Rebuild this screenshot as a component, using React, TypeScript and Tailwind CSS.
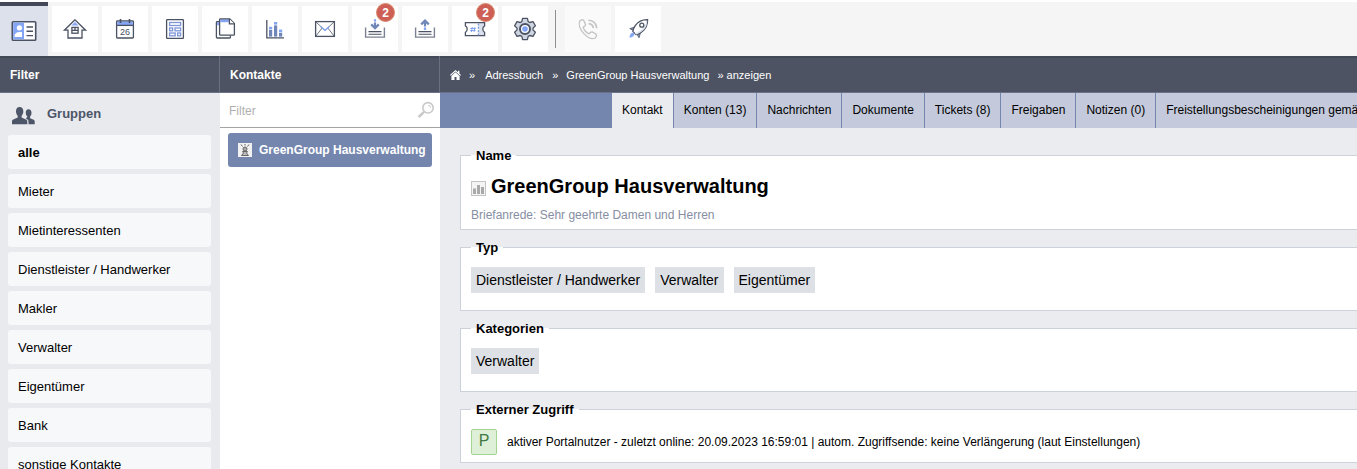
import type { ReactNode } from 'react'

const DARK = '#4b5263'
const BLUE = '#84a4f4'
const SOFT = '#dbe1ec'

const groups = [
  'alle',
  'Mieter',
  'Mietinteressenten',
  'Dienstleister / Handwerker',
  'Makler',
  'Verwalter',
  'Eigentümer',
  'Bank',
  'sonstige Kontakte',
]

const tabs = [
  'Kontakt',
  'Konten (13)',
  'Nachrichten',
  'Dokumente',
  'Tickets (8)',
  'Freigaben',
  'Notizen (0)',
  'Freistellungsbescheinigungen gemäß §48 EStG',
]

function Icon({ children }: { children: ReactNode }) {
  return (
    <svg width="26" height="26" viewBox="0 0 26 26" fill="none" stroke={DARK} strokeWidth="1.3" aria-hidden="true">
      {children}
    </svg>
  )
}

function CardIcon() {
  return (
    <Icon>
      <rect x="1.3" y="3.8" width="23.4" height="18.4" rx="0.8" fill="#fff" strokeWidth="1.6" />
      <rect x="2.2" y="4.6" width="10.8" height="16.8" fill={BLUE} stroke="none" />
      <circle cx="8.4" cy="9.8" r="2.6" fill="#fff" stroke="none" />
      <path d="M3.6 19v-1.2c0-2.4 2-3.8 5-3.8h2.4v5z" fill="#fff" stroke="none" />
      <path d="M15.5 9h6.5M15.5 13.2h6.5M15.5 17.6h6.5" strokeWidth="1.4" />
    </Icon>
  )
}

function HouseIcon() {
  return (
    <Icon>
      <path d="M13 3.8 2.4 14.2H6v7.8h14v-7.800h3.600L13 3.800z" fill="#fff" />
      <path d="M13 6 9.400 9.500h7.200z" fill={BLUE} stroke="none" />
      <rect x="9.9" y="11.4" width="6.2" height="5.8" />
      <path d="M13 11.4v3M9.9 14.4h6.2" />
    </Icon>
  )
}

function CalendarIcon() {
  return (
    <Icon>
      <rect x="4.6" y="5" width="16.8" height="17" rx="0.8" />
      <rect x="5.2" y="5.6" width="15.6" height="3.6" fill={BLUE} stroke="none" />
      <path d="M4.6 9.4h16.8" />
      <path d="M8.5 3v4M17.5 3v4" strokeWidth="1.6" />
      <text x="13" y="19" fontSize="9" textAnchor="middle" fill={DARK} stroke="none">
        26
      </text>
    </Icon>
  )
}

function FormIcon() {
  return (
    <Icon>
      <rect x="4.6" y="3.6" width="16.8" height="18.8" rx="0.6" />
      <g stroke="#7d96d8">
        <rect x="7.6" y="6.5" width="11" height="3" />
        <rect x="7.6" y="12" width="3" height="2.8" />
        <rect x="13" y="12" width="5.6" height="2.8" />
        <rect x="7.6" y="17" width="5.6" height="2.8" />
        <rect x="15.6" y="17" width="3" height="2.8" />
      </g>
    </Icon>
  )
}

function DocsIcon() {
  return (
    <Icon>
      <path d="M7.5 5.6H5.2q-.8 0-.8.8v14.8q0 .8.8.8h12.4q.8 0 .8-.8v-1.7" />
      <path d="M5.1 6.2h2.6v3H5.1z" fill={BLUE} stroke="none" />
      <path d="M8.400 3h9.400l4.600 4.600v10.800q0 .8-.8.8H8.400q-.8 0-.8-.8V3.800q0-.8.8-.8z" fill="#fff" />
      <path d="M8.2 3.6h8.6v2.6H8.2z" fill={BLUE} stroke="none" />
      <path d="M17.4 3v4.8h5" fill="#fff" />
    </Icon>
  )
}

function ChartIcon() {
  return (
    <Icon>
      <path d="M4.8 4v17.8H22" />
      <g stroke="none" fill="#6f86b8">
        <rect x="7" y="14" width="3.2" height="6.6" />
        <rect x="12" y="9.4" width="3.2" height="11.2" />
        <rect x="17" y="16.8" width="3.2" height="3.8" />
      </g>
      <g stroke="none" fill={BLUE}>
        <rect x="7" y="10.8" width="3.2" height="2.6" />
        <rect x="12" y="6" width="3.2" height="2.6" />
        <rect x="17" y="13.6" width="3.2" height="2.6" />
      </g>
    </Icon>
  )
}

function MailIcon() {
  return (
    <Icon>
      <rect x="3.6" y="5.6" width="18.8" height="14.8" />
      <path d="M3.6 5.6l9.4 8.8 9.4-8.8M3.6 20.4l6.6-8.4M22.4 20.4L15.8 12" strokeWidth="0.8" />
      <path d="M8.6 10.4l4.400 4 4.400-4" stroke={BLUE} />
    </Icon>
  )
}

function InboxIcon() {
  return (
    <Icon>
      <path d="M3.6 11.5v9.600h18.800v-9.600" stroke="#7c8292" strokeWidth="1.400" />
      <path d="M6.500 15.600h13M6.500 18.200h13" strokeWidth="1.100" />
      <path d="M13 6.500v5M9.200 8.400l3.800 3.800 3.800-3.800" stroke="#6f86b8" strokeWidth="2.200" />
      <path d="M13 3.200v2.400" stroke={BLUE} strokeWidth="2.200" />
    </Icon>
  )
}

function OutboxIcon() {
  return (
    <Icon>
      <path d="M3.600 11.500v9.600h18.800v-9.600" stroke="#7c8292" strokeWidth="1.400" />
      <path d="M6.500 15.600h13M6.500 18.200h13" strokeWidth="1.100" />
      <path d="M13 4.600v5.800M9.200 8.400 13 4.600l3.800 3.800" stroke="#6f86b8" strokeWidth="2.200" />
      <path d="M13 11.400v2.600" stroke={BLUE} strokeWidth="2.200" />
    </Icon>
  )
}

function TicketIcon() {
  return (
    <Icon>
      <path d="M16.6 6.8h6v3.2q-1.8.6-1.8 3t1.8 3v3.4h-6z" fill={SOFT} stroke="none" />
      <path d="M3.4 6.6h19.2v3.2q-1.8.8-1.8 3.3t1.8 3.3v3.2H3.4v-3.2q1.8-.8 1.8-3.3T3.4 9.8z" />
      <path d="M16.4 7.4v12" strokeDasharray="2 1.4" stroke="#7d96d8" />
      <path d="M10.3 11l-.9 5M12.9 11l-.9 5M8.4 12.5h5.4M8.1 14.5h5.4" stroke={BLUE} strokeWidth="1" />
    </Icon>
  )
}

function GearIcon() {
  return (
    <Icon>
      <path
        d="M9.8 5.6l.8-3.2h4.8l.8 3.2 1.6.9 3.200-.9 2.400 4.200-2.400 2.300v1.800l2.400 2.300-2.400 4.200-3.200-.9-1.600.9-.8 3.200h-4.800l-.8-3.200-1.600-.9-3.200.9-2.400-4.200L5 13.900v-1.800L2.600 9.800 5 5.600l3.200.9z"
        fill="#cfd5e1"
        strokeLinejoin="round"
      />
      <circle cx="13" cy="13" r="5" fill="#fff" strokeWidth="2" />
      <circle cx="13" cy="13" r="2.8" fill={BLUE} stroke="none" />
    </Icon>
  )
}

function PhoneIcon() {
  return (
    <Icon>
      <g stroke="#c3c3c3">
        <path d="M5 4.6l2.4-1 1.2.6 2 4.2-.5 1.4-1.9 1.4c.8 2.6 3.2 5.4 5.8 6.6l1.8-1.6 1.5-.3 3.8 2.4.5 1.4-1.3 2.3c-2.8 1.5-7.4-.2-11.4-4.4C4.9 13.6 3 8 5 4.6z" />
        <path d="M13.6 7.6c2.600.2 4.400 2 4.800 4.600M13.4 4.2c4.800.3 7.900 3.400 8.300 8" strokeWidth="1.6" />
      </g>
    </Icon>
  )
}

function RocketIcon() {
  return (
    <Icon>
      <path d="M9.4 11.2l-4.6 1.4 2.8 1.6zM15.4 17l-1.4 4.8-1.6-3z" fill="#8fa0c4" strokeWidth="0.8" />
      <path d="M22.6 3.6c-5.4-.2-9.2 1.6-12.2 5.8-1.2 1.8-2.2 4-2.6 6l3.2 3.2c2.2-.4 4.2-1.4 6-2.8 4-3.2 5.8-6.8 5.6-12.2z" fill="#fff" />
      <path d="M9.800 17.400c3.400-.8 7-3.400 9.600-7.400 1.400-2.200 2.400-4 2.800-5.800.2 5-1.800 8.600-5.600 11.400-1.800 1.400-3.600 2.400-5.400 2.800z" fill={SOFT} stroke="none" />
      <circle cx="16.8" cy="9.2" r="2" fill="#fff" />
      <path d="M8.4 16.6c-2.2.2-3.6 1.6-4 5.2 3.2-.4 4.6-1.6 5-3.8z" fill={BLUE} stroke="none" />
    </Icon>
  )
}

const tools = [
  { label: 'Objekte', icon: <HouseIcon /> },
  { label: 'Kalender', icon: <CalendarIcon /> },
  { label: 'Formulare', icon: <FormIcon /> },
  { label: 'Dokumente', icon: <DocsIcon /> },
  { label: 'Auswertungen', icon: <ChartIcon /> },
  { label: 'Nachrichten', icon: <MailIcon /> },
  { label: 'Eingang', icon: <InboxIcon />, badge: 2 },
  { label: 'Ausgang', icon: <OutboxIcon /> },
  { label: 'Tickets', icon: <TicketIcon />, badge: 2 },
  { label: 'Einstellungen', icon: <GearIcon /> },
]

function Toolbar() {
  return (
    <nav className="flex h-[54px] shrink-0 bg-[#f5f5f5]">
      <button aria-label="Adressbuch" className="flex w-12 items-center justify-center border-t-4 border-[#434857] bg-[#dde1eb]">
        <CardIcon />
      </button>
      <div className="flex gap-1 p-1">
        {tools.map((tool) => (
          <button key={tool.label} aria-label={tool.label} className="relative flex w-[46px] items-center justify-center bg-white">
            {tool.icon}
            {tool.badge && (
              <span className="absolute -top-[3px] right-[3px] flex size-[19px] items-center justify-center rounded-full border border-[#d98a6c] bg-[#cd5f56] text-[12px] font-bold text-white">
                {tool.badge}
              </span>
            )}
          </button>
        ))}
      </div>
      <div className="my-2 ml-[3px] w-px bg-[#8f8f8f]" />
      <div className="flex gap-1 px-[9px] py-1">
        <button aria-label="Telefon" disabled className="flex w-[46px] items-center justify-center bg-[#fafafa]">
          <PhoneIcon />
        </button>
        <button aria-label="Schnellstart" className="flex w-[46px] items-center justify-center bg-white">
          <RocketIcon />
        </button>
      </div>
    </nav>
  )
}

function ColumnHeader({ children }: { children: ReactNode }) {
  return (
    <div className="flex h-[37px] shrink-0 items-center border-t-2 border-b border-t-[#424956] border-b-[#69728a] bg-[#4d5362] px-[10px] text-[12px] text-white">
      {children}
    </div>
  )
}

function Sidebar() {
  return (
    <aside className="flex w-[220px] shrink-0 flex-col overflow-hidden bg-[#e8eaee]">
      <div className="border-r border-[#69707f]">
        <ColumnHeader>
          <h2 className="font-bold">Filter</h2>
        </ColumnHeader>
      </div>
      <div className="flex h-[42px] shrink-0 items-center gap-3 px-3">
        <svg width="23" height="18" viewBox="0 0 23 18" fill="#4d5568" className="mt-1" aria-hidden="true">
          <path d="M16.5 2.2c2 0 3 1.5 3 3.6 0 1.6-.6 3-1.4 3.8v1.6l3.6 1.6c.7.400 1 1 1 1.800v2.600h-6.200v-2.400c0-1.500-.6-2.200-1.800-2.800l-1-.5 1.600-1.400V9.600c-.9-.8-1.500-2.200-1.500-3.800 0-2.100.7-3.600 2.700-3.600z" />
          <path d="M7.6 0c2.5 0 3.7 1.7 3.7 4.2 0 1.900-.7 3.600-1.700 4.500v1.900l4.400 2c.9.400 1.300 1 1.300 2v2.600H0v-2.600c0-1 .4-1.600 1.300-2l4.400-2V8.700C4.700 7.800 4 6.100 4 4.200 4 1.700 5.100 0 7.600 0z" />
        </svg>
        <h3 className="text-[13px] font-bold text-[#4d5568]">Gruppen</h3>
      </div>
      <ul className="flex flex-col gap-[5px] pr-[9px] pl-2">
        {groups.map((group, i) => (
          <li key={group}>
            <a
              href="#"
              className={
                'flex h-[34px] items-center rounded-[3px] bg-[#f7f8fa] px-[10px] pt-[2px] text-[13px] text-black ' +
                (i === 0 ? 'font-bold' : '')
              }
            >
              {group}
            </a>
          </li>
        ))}
      </ul>
    </aside>
  )
}

function ContactList() {
  return (
    <section className="flex w-[220px] shrink-0 flex-col bg-white">
      <div className="border-r border-[#69707f]">
        <ColumnHeader>
          <h2 className="font-bold">Kontakte</h2>
        </ColumnHeader>
      </div>
      <label className="flex h-[35px] shrink-0 items-center border-b border-[#a4a4a4] pr-[5px] pl-[9px]">
        <input
          type="text"
          placeholder="Filter"
          aria-label="Kontakte filtern"
          className="min-w-0 flex-1 pt-[2px] text-[12px] outline-none placeholder:text-[#b0b0b0]"
        />
        <svg width="18" height="18" viewBox="0 0 18 18" fill="none" stroke="#c9c9c9" aria-hidden="true">
          <circle cx="11" cy="6.8" r="5.2" strokeWidth="1.6" />
          <path d="M7 10.8l-5.400 5.400" strokeWidth="2.6" />
          <path d="M11 4.2a2.6 2.6 0 0 1 2.6 2.6" strokeWidth="1" />
        </svg>
      </label>
      <a
        href="#"
        className="mx-2 mt-[5px] flex h-[34px] items-center gap-[7px] rounded-[3px] bg-[#7486ae] pl-[10px] text-[12px] font-bold whitespace-nowrap text-white"
      >
        <svg width="14" height="14" viewBox="0 0 14 14" aria-hidden="true">
          <rect width="14" height="14" fill="#f1f1f1" />
          <g fill="none" stroke="#666" strokeWidth="1">
            <path d="M3 1.5l1.5 2M11 1.5l-1.5 2M7 1v1.5" />
            <circle cx="7" cy="6" r="2" fill="#aaa" />
            <path d="M4.5 8.5h5M4.5 8.5l1 1.5-2 2.5h7l-2-2.5 1-1.5" fill="#bbb" />
          </g>
        </svg>
        GreenGroup Hausverwaltung
      </a>
    </section>
  )
}

function Box({ title, className, children }: { title: string; className: string; children: ReactNode }) {
  return (
    <fieldset className={'min-w-0 border border-r-0 border-[#cdd1da] bg-white px-[10px] ' + className}>
      <legend className="px-[5px] text-[13px] leading-[15px] font-bold">{title}</legend>
      {children}
    </fieldset>
  )
}

function Chips({ items }: { items: string[] }) {
  return (
    <div className="flex gap-[10px]">
      {items.map((item) => (
        <span key={item} className="flex h-[26px] items-center bg-[#dde0e5] px-[5px] text-[14px]">
          {item}
        </span>
      ))}
    </div>
  )
}

function Detail() {
  return (
    <main className="flex min-w-0 flex-1 flex-col overflow-hidden bg-[#ebecf0]">
      <ColumnHeader>
        <nav className="flex items-center text-[11px] whitespace-nowrap">
          <a href="#" aria-label="Startseite">
            <svg width="11" height="10" viewBox="0 0 11 10" fill="#fff" aria-hidden="true">
              <path d="M5.5 0 0 5l.8.8L5.5 1.6l4.700 4.200L11 5 9.400 3.500V.8H8v1.400z" />
              <path d="M5.5 2.200 1.400 5.900V10h3.100V7h2v3h3.100V5.900z" />
            </svg>
          </a>
          <span className="mr-[10px] ml-2">»</span>
          <a href="#">Adressbuch</a>
          <span className="mr-2 ml-[9px]">»</span>
          <a href="#">GreenGroup Hausverwaltung</a>
          <span className="ml-2">» anzeigen</span>
        </nav>
      </ColumnHeader>
      <div className="flex h-[35px] shrink-0 bg-[#7486ae] pl-[172px]">
        {tabs.map((tab, i) => (
          <a
            key={tab}
            href="#"
            className={
              'flex shrink-0 items-center border-r border-[#7486ae] px-[10px] pb-[2px] text-[12px] whitespace-nowrap text-black ' +
              (i === 0 ? 'bg-[#ebecf0]' : 'bg-[#c4cadb]')
            }
          >
            {tab}
          </a>
        ))}
      </div>
      <div className="flex flex-col gap-[10px] pt-5 pl-5 text-black">
        <Box title="Name" className="pt-[11px] pb-[6px]">
          <h1 className="flex items-center gap-[5px] text-[20px] leading-6 font-bold whitespace-nowrap">
            <svg width="15" height="15" viewBox="0 0 15 15" className="mt-1" aria-hidden="true">
              <rect x="0.5" y="0.5" width="14" height="14" fill="#f4f4f4" stroke="#c4c4c4" />
              <path d="M2 7.5h3V13H2zM6 4h3v9H6zM10 6h3v7h-3z" fill="#a9a9a9" />
            </svg>
            GreenGroup Hausverwaltung
          </h1>
          <p className="mt-[9px] text-[12px] leading-4 text-[#868ea3]">Briefanrede: Sehr geehrte Damen und Herren</p>
        </Box>
        <Box title="Typ" className="pt-3 pb-[17px]">
          <Chips items={['Dienstleister / Handwerker', 'Verwalter', 'Eigentümer']} />
        </Box>
        <Box title="Kategorien" className="pt-3 pb-[17px]">
          <Chips items={['Verwalter']} />
        </Box>
        <Box title="Externer Zugriff" className="pt-3 pb-[7px]">
          <div className="flex items-center gap-[10px] text-[12px] whitespace-nowrap">
            <span className="flex size-[26px] justify-center rounded-[2px] border border-[#a5d391] bg-[#dff0d8] text-[16px] leading-[22px] text-[#3f7a43]">
              P
            </span>
            aktiver Portalnutzer - zuletzt online: 20.09.2023 16:59:01 | autom. Zugriffsende: keine Verlängerung (laut
            Einstellungen)
          </div>
        </Box>
      </div>
    </main>
  )
}

export default function App() {
  return (
    <div className="flex h-screen flex-col overflow-hidden bg-white pt-[2px] font-['Liberation_Sans',Arial,sans-serif]">
      <Toolbar />
      <div className="flex min-h-0 flex-1">
        <Sidebar />
        <ContactList />
        <Detail />
      </div>
    </div>
  )
}
